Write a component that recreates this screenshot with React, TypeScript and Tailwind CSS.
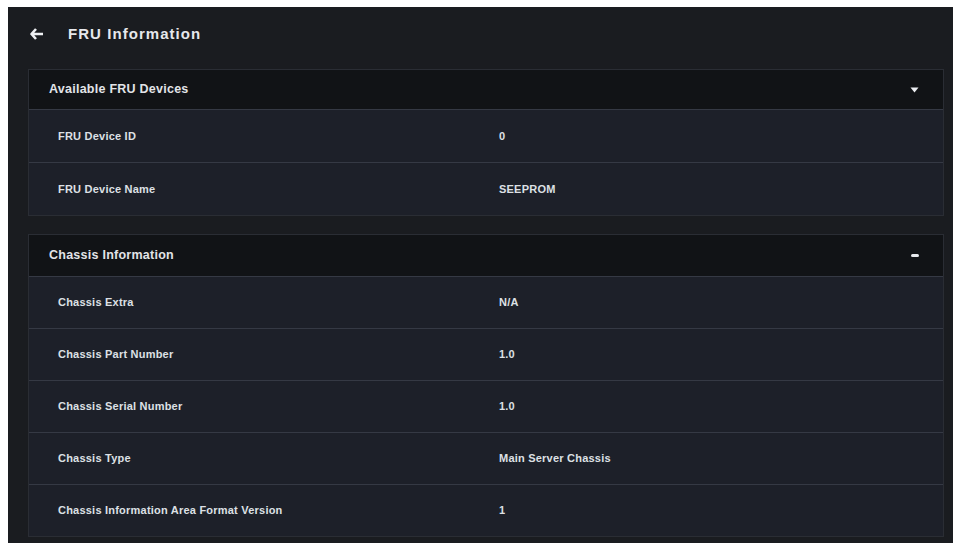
import React from 'react';

type Row = { label: string; value: string };

const fruRows: Row[] = [
  { label: 'FRU Device ID', value: '0' },
  { label: 'FRU Device Name', value: 'SEEPROM' },
];

const chassisRows: Row[] = [
  { label: 'Chassis Extra', value: 'N/A' },
  { label: 'Chassis Part Number', value: '1.0' },
  { label: 'Chassis Serial Number', value: '1.0' },
  { label: 'Chassis Type', value: 'Main Server Chassis' },
  { label: 'Chassis Information Area Format Version', value: '1' },
];

const Section: React.FC<{ title: string; rows: Row[]; open?: boolean; headH: string; rowH: string }> = ({
  title,
  rows,
  open,
  headH,
  rowH,
}) => (
  <div className="border border-[#2a2d34] bg-[#1d2029]">
    <div className={`flex items-center justify-between bg-[#111316] pl-[20px] pr-[24px] ${headH}`}>
      <span className="text-[12.5px] font-bold tracking-[0.02em] text-[#e2e4e8]">{title}</span>
      {open ? (
        <span className="block h-[3px] w-[8px] rounded-full bg-[#e8eaee]" />
      ) : (
        <svg width="9" height="6" viewBox="0 0 9 6">
          <path d="M0.5 0.5 L8.5 0.5 L4.5 5.5 Z" fill="#eceef2" />
        </svg>
      )}
    </div>
    {rows.map((r) => (
      <div key={r.label} className={`grid grid-cols-[458px_1fr] items-center border-t border-[#353944] ${rowH}`}>
        <span className="pl-[29px] text-[11px] font-bold tracking-[0.02em] text-[#dde0e5]">{r.label}</span>
        <span className="pl-[12px] text-[11px] font-bold tracking-[0.02em] text-[#dde0e5]">{r.value}</span>
      </div>
    ))}
  </div>
);

export default function App() {
  return (
    <div className="h-[548px] w-[962px] bg-white pl-[8px] pt-[7px] font-['Liberation_Sans',Arial,sans-serif]">
      <div className="flex h-[536px] w-[945px] flex-col overflow-hidden bg-[#1a1c20] pl-[20px] pr-[9px]">
        <div className="flex h-[62px] shrink-0 items-start gap-[24px] pl-[2px] pt-[19px]">
          <svg width="14" height="12" viewBox="0 0 14 12" className="mt-[2px]">
            <path d="M6 1 L1.5 6 L6 11 M1.8 6 L13 6" stroke="#eef0f3" strokeWidth="2.6" fill="none" strokeLinejoin="round" />
          </svg>
          <span className="text-[15px] leading-[16px] font-bold tracking-[0.07em] text-[#e6e8ec]">FRU Information</span>
        </div>
        <Section title="Available FRU Devices" rows={fruRows} headH="h-[39px]" rowH="h-[53px]" />
        <div className="h-[18px] shrink-0" />
        <Section title="Chassis Information" rows={chassisRows} open headH="h-[41px]" rowH="h-[52px]" />
      </div>
    </div>
  );
}
